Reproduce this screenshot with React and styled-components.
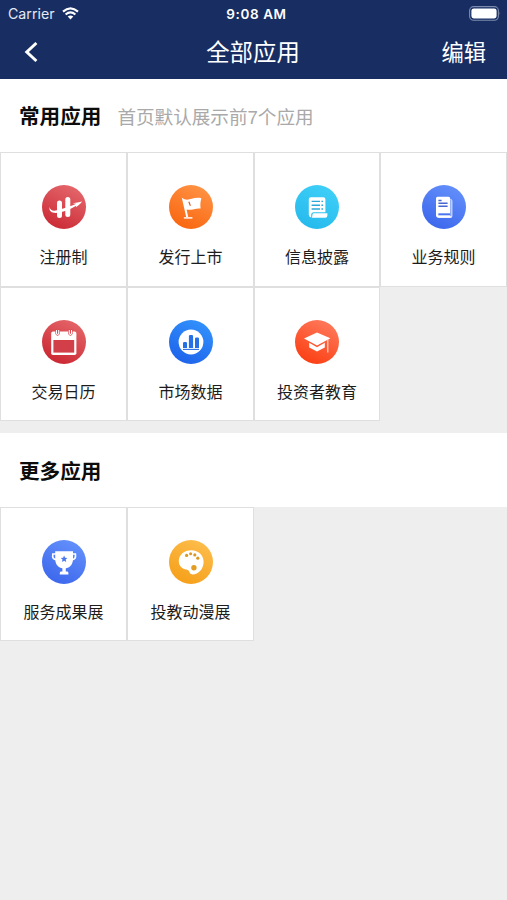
import React from 'react'
import styled, { createGlobalStyle } from 'styled-components'

const GlobalStyle = createGlobalStyle`
  * {
    box-sizing: border-box;
  }
  body {
    margin: 0;
    background: #eeeeee;
    font-family: "Liberation Sans", "Noto Sans CJK SC", sans-serif;
  }
`;

const Page = styled.div`
  width: 507px;
  min-height: 900px;
  background: #eeeeee;
`;

const Header = styled.header`
  height: 79px;
  background: #182e62;
  color: #fff;
`;

const StatusBar = styled.div`
  display: grid;
  grid-template-columns: 1fr auto 1fr;
  align-items: center;
  height: 27px;
  padding: 0 6px 0 8px;
  font-family: Inter, sans-serif;
  font-size: 13.5px;
`;

const Carrier = styled.div`
  display: flex;
  align-items: center;
  gap: 7px;
  color: #e3e9f5;
  font-size: 14.2px;
`;

const Clock = styled.div`
  padding-left: 4px;
  font-weight: 600;
  letter-spacing: 0.6px;
`;

const Battery = styled.svg`
  justify-self: end;
`;

const NavBar = styled.div`
  display: grid;
  grid-template-columns: 1fr auto 1fr;
  align-items: center;
  height: 50px;
  padding: 0 21px 0 23px;
`;

const Title = styled.div`
  padding: 3px 3px 0 0;
  font-size: 23.4px;
  line-height: 47px;
`;

const EditButton = styled.div`
  justify-self: end;
  padding-top: 3px;
  font-size: 22.3px;
  line-height: 47px;
`;

const Section = styled.section`
  margin-bottom: 12px;
`;

const SectionHead = styled.div`
  display: flex;
  align-items: center;
  height: ${props => props.$height}px;
  padding: 0 0 1px 19px;
  background: #fff;
`;

const SectionTitle = styled.div`
  color: #0c0c0c;
  font-size: 20.6px;
  font-weight: 700;
`;

const Hint = styled.div`
  margin-left: 16px;
  color: #a9a9a9;
  font-size: 18.6px;
`;

const Grid = styled.div`
  display: grid;
  grid-template-columns: 127px 127px 126px 127px;
  grid-template-rows: ${props => props.$rows};
`;

const Cell = styled.div`
  display: flex;
  flex-direction: column;
  align-items: center;
  padding-top: 32px;
  border: 1px solid #dfdfdf;
  background: #fff;
`;

const Label = styled.div`
  margin-top: 17px;
  color: #1c1c1c;
  font-size: 16px;
  line-height: 24px;
  white-space: nowrap;
`;

// round badge with a diagonal gradient, glyphs are drawn in a 44x44 box
function Badge({ id, from, to, children }) {
  return (
    <svg width="44" height="44" viewBox="0 0 44 44">
      <defs>
        <linearGradient id={id} x1="0.75" y1="0" x2="0.25" y2="1">
          <stop offset="0" stopColor={from} />
          <stop offset="1" stopColor={to} />
        </linearGradient>
      </defs>
      <circle cx="22" cy="22" r="22" fill={`url(#${id})`} />
      {children}
    </svg>
  )
}

const icons = {
  register: (
    <Badge id="register" from="#e4686c" to="#cb2934">
      <path d="M17.5 18V30.6M25.8 14.4V29.4" stroke="#fff" strokeWidth="5" strokeLinecap="round" />
      <path d="M7.6 22C8.4 26.4 12.5 26.2 18 24.6C25 22.6 30 20.6 34.2 18.8L30.5 18.2C34 17.6 37 17 40.2 16.4C38.2 18.6 36 20.8 34 22.2L34.2 20.8C29 24 23 26.6 17 27.6C11.5 28.6 6.6 27.4 7.6 22Z" fill="#fff" />
    </Badge>
  ),
  flag: (
    <Badge id="flag" from="#ff9345" to="#f9650f">
      <path d="M12.8 12.8C16 15.2 19.4 14.9 22.6 13.8C26 12.8 29 12.4 32.4 13.2C31.2 16.8 31.2 20.2 31.6 23.6C27 22.9 22.4 25.6 17.6 24.6L19.2 32H17.2Z" fill="#fff" />
      <path d="M15.6 32.8H22.8" stroke="#ffe6d6" strokeWidth="1.7" strokeLinecap="round" />
      <path d="M19.8 16.8L21.4 20.8" stroke="#d9541a" strokeWidth="1.1" />
    </Badge>
  ),
  disclosure: (
    <Badge id="disclosure" from="#3fd0f8" to="#25b9ec">
      <path d="M15.8 12.2H28.4Q30.4 12.2 30.4 14.2V27.2H18.4Q16.2 27.4 16.2 29.6V32.6Q13.8 32 13.8 29.8V14.2Q13.8 12.2 15.8 12.2Z" fill="#fff" />
      <path d="M18.6 28.2H32.4V30.6Q32.4 32.8 30.2 32.8H16.6Q17.4 32 17.4 30Q17.4 28.2 18.6 28.2Z" fill="#fff" />
      <path d="M16.6 16.4H25M16.6 20.2H25M16.6 24H25" stroke="#29a9d8" strokeWidth="1.4" />
      <path d="M26.4 16.4H28M26.4 20.2H28M26.4 24H28" stroke="#29a9d8" strokeWidth="1.4" />
    </Badge>
  ),
  rules: (
    <Badge id="rules" from="#6490fb" to="#3b66ec">
      <path d="M17 14H28.5Q30.4 14 30.4 16V31Q30.4 33 28.4 33H16.6Q14.2 32.6 14.2 30.5Z" fill="#dce6ff" />
      <path d="M15.6 11.8H26.4Q28.2 11.8 28.2 13.6V28H17Q15.6 28.2 15.6 29.4Q15.6 30.8 17 30.8H28.6V32.4H16.6Q14 32.2 14 29.4V13.6Q14 11.8 15.6 11.8Z" fill="#fff" />
      <path d="M28.8 14.4V31.2" stroke="#4b74ef" strokeWidth="0.7" />
      <path d="M16.4 28.4H28.2V30.2H16.4Z" fill="#4b74ef" />
      <path d="M16.4 15.4H19.6M16.4 18.2H25.6M16.4 21.2H25.6" stroke="#4667cf" strokeWidth="1.5" />
    </Badge>
  ),
  calendar: (
    <Badge id="calendar" from="#e4666a" to="#ca2530">
      <rect x="9.2" y="11.6" width="25.2" height="23.4" rx="1.8" fill="#fff" />
      <rect x="11.4" y="20" width="20.8" height="12.6" fill="#d23f48" />
      <path d="M13.4 9.6V14Q15.6 17.6 17.8 14V9.6ZM26.2 9.6V14Q28.4 17.6 30.6 14V9.6Z" fill="#d8444c" />
      <path d="M14.5 10V13.4Q15.6 15.6 16.7 13.4V10M27.3 10V13.4Q28.4 15.6 29.5 13.4V10" fill="none" stroke="#fff" strokeWidth="1.1" />
    </Badge>
  ),
  market: (
    <Badge id="market" from="#3292fc" to="#1e62ea">
      <circle cx="22" cy="22" r="12.4" fill="#fff" />
      <path d="M14 28V23.2Q14 22 15.2 22H16.8Q18 22 18 23.2V28ZM19.9 28V16.2Q19.9 15 21.1 15H22.9Q24.1 15 24.1 16.2V28ZM26 28V18.8Q26 17.6 27.2 17.6H28.8Q30 17.6 30 18.8V28Z" fill="#2670e6" />
      <path d="M14 29.4H30" stroke="#2670e6" strokeWidth="1.1" />
    </Badge>
  ),
  education: (
    <Badge id="education" from="#ff7a5c" to="#fb3d10">
      <path d="M9 18.4L22 12.4L35.4 18.2L22 25.6Z" fill="#fff" />
      <path d="M14.2 22.8L22 27.2L29.8 22.8V27.4L22 31.4L14.2 27.4Z" fill="#fff" />
      <path d="M32.8 19V32.4" stroke="#ffd9cd" strokeWidth="1.2" />
    </Badge>
  ),
  trophy: (
    <Badge id="trophy" from="#6491fb" to="#3b66ec">
      <path d="M13.8 14H10.8Q9.8 19.6 14.6 19.8M30.2 14H33.4Q34.4 19.6 29.6 19.8" fill="none" stroke="#fff" strokeWidth="1.6" />
      <path d="M13.2 11.2H31V19C31 24.6 27.6 28.4 22.1 28.4C16.6 28.4 13.2 24.6 13.2 19Z" fill="#fff" />
      <path d="M20.4 27.5H23.8V31.6H25Q26.4 31.6 26.4 33V34.4H17.8V33Q17.8 31.6 19.2 31.6H20.4Z" fill="#fff" />
      <path d="M22.1 15.6L23.1 17.8L25.4 18L23.7 19.6L24.2 22L22.1 20.8L20 22L20.5 19.6L18.8 18L21.1 17.8Z" fill="#4a78f0" />
    </Badge>
  ),
  palette: (
    <Badge id="palette" from="#fdbd4c" to="#f59f18">
      <path d="M22.3 10.2C29.4 10.2 34.6 15.2 34.6 22C34.6 28.8 29.6 34.4 23.4 34.4C19.8 34.4 21.4 30.2 17.4 29.6C13.4 29 9.8 26.2 9.8 21C9.8 14.8 15.2 10.2 22.3 10.2Z" fill="#fff" />
      <circle cx="17.6" cy="15.4" r="1.6" fill="#dc9826" />
      <circle cx="21.6" cy="13.8" r="1.5" fill="#dc9826" />
      <circle cx="25.8" cy="14.9" r="1.6" fill="#dc9826" />
      <circle cx="28.8" cy="18.2" r="1.6" fill="#dc9826" />
      <circle cx="24.9" cy="27.8" r="2.7" fill="#e39c24" />
    </Badge>
  ),
}

const commonApps = [
  { icon: 'register', name: '注册制' },
  { icon: 'flag', name: '发行上市' },
  { icon: 'disclosure', name: '信息披露' },
  { icon: 'rules', name: '业务规则' },
  { icon: 'calendar', name: '交易日历' },
  { icon: 'market', name: '市场数据' },
  { icon: 'education', name: '投资者教育' },
]

const moreApps = [
  { icon: 'trophy', name: '服务成果展' },
  { icon: 'palette', name: '投教动漫展' },
]

function AppGrid({ apps, rows }) {
  return (
    <Grid $rows={rows}>
      {apps.map(app => (
        <Cell key={app.name}>
          {icons[app.icon]}
          <Label>{app.name}</Label>
        </Cell>
      ))}
    </Grid>
  )
}

function App() {
  return (
    <Page>
      <GlobalStyle />
      <Header>
        <StatusBar>
          <Carrier>
            <span>Carrier</span>
            <svg width="17" height="13" viewBox="0 0 17 13">
              <path d="M1 4.6Q8.5 -2 16 4.6" fill="none" stroke="#fff" strokeWidth="2.2" />
              <path d="M3.6 7.5Q8.5 3.2 13.4 7.5" fill="none" stroke="#fff" strokeWidth="2.1" />
              <path d="M5.7 9.6Q8.5 7.4 11.3 9.6L8.5 12.5Z" fill="#fff" />
            </svg>
          </Carrier>
          <Clock>9:08 AM</Clock>
          <Battery width="32" height="15" viewBox="0 0 32 15">
            <rect x="0.6" y="0.6" width="28.8" height="13.6" rx="4" fill="none" stroke="#7c8aad" strokeWidth="1.1" />
            <rect x="2.4" y="2.4" width="25.2" height="10" rx="2.4" fill="#fff" />
            <path d="M30.6 5.2Q32 7.4 30.6 9.6Z" fill="#7c8aad" />
          </Battery>
        </StatusBar>
        <NavBar>
          <svg width="17" height="22" viewBox="0 0 17 22">
            <path d="M13.4 2L3.8 11L13.4 20" fill="none" stroke="#fff" strokeWidth="3" />
          </svg>
          <Title>全部应用</Title>
          <EditButton>编辑</EditButton>
        </NavBar>
      </Header>

      <Section>
        <SectionHead $height={73}>
          <SectionTitle>常用应用</SectionTitle>
          <Hint>首页默认展示前7个应用</Hint>
        </SectionHead>
        <AppGrid apps={commonApps} rows="135px 134px" />
      </Section>

      <Section>
        <SectionHead $height={74}>
          <SectionTitle>更多应用</SectionTitle>
        </SectionHead>
        <AppGrid apps={moreApps} rows="134px" />
      </Section>
    </Page>
  )
}

export default App
